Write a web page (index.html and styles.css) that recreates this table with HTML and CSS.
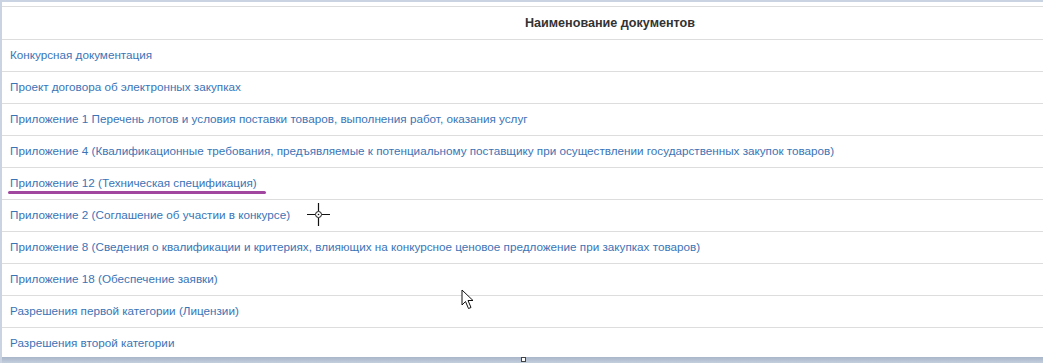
FILE: index.html
```html
<!DOCTYPE html>
<html lang="ru">
<head>
<meta charset="utf-8">
<link rel="stylesheet" href="styles.css">
</head>
<body>
<div class="frame">
  <div class="panel">
    <div class="table">
      <div class="head">Наименование документов</div>
      <div class="row"><a class="link">Конкурсная документация</a></div>
      <div class="row"><a class="link">Проект договора об электронных закупках</a></div>
      <div class="row"><a class="link">Приложение 1 Перечень лотов и условия поставки товаров, выполнения работ, оказания услуг</a></div>
      <div class="row"><a class="link">Приложение 4 (Квалификационные требования, предъявляемые к потенциальному поставщику при осуществлении государственных закупок товаров)</a></div>
      <div class="row"><a class="link">Приложение 12 (Техническая спецификация)</a></div>
      <div class="row"><a class="link">Приложение 2 (Соглашение об участии в конкурсе)</a></div>
      <div class="row"><a class="link">Приложение 8 (Сведения о квалификации и критериях, влияющих на конкурсное ценовое предложение при закупках товаров)</a></div>
      <div class="row"><a class="link">Приложение 18 (Обеспечение заявки)</a></div>
      <div class="row"><a class="link">Разрешения первой категории (Лицензии)</a></div>
      <div class="row"><a class="link">Разрешения второй категории</a></div>
    </div>
    <div class="mark"></div>
    <svg class="crosshair" width="23" height="23" viewBox="0 0 23 23">
      <path d="M11.5 0V8M11.5 15V23M0 11.5H8M15 11.5H23" stroke="#111" stroke-width="1.2" fill="none"/>
      <circle cx="11.5" cy="11.5" r="3" stroke="#111" stroke-width="1" fill="#fff"/>
      <circle cx="11.5" cy="11.5" r="0.8" fill="#111"/>
    </svg>
    <svg class="cursor" width="14" height="21" viewBox="0 0 14 21">
      <path d="M1 1V16L4.5 12.5L7.5 19.5L10 18.5L7 11.5H12Z" fill="#fff" stroke="#111" stroke-width="1" stroke-linejoin="round"/>
    </svg>
  </div>
  <div class="bottom"><span class="handle"></span></div>
</div>
</body>
</html>
```

FILE: styles.css
```css
html, body {
  margin: 0;
  padding: 0;
}
body {
  background: #c9d3e2;
  height: 363px;
  overflow: hidden;
  font-family: "Liberation Sans", Arial, sans-serif;
  font-size: 11.7px;
}
.frame {
  padding: 2px 0 0 2px;
}
.panel {
  position: relative;
  background: #fff;
  height: 355px;
  overflow: hidden;
  padding-top: 4px;
  box-sizing: border-box;
}
.table {
  width: 1216px;
  border-top: 1px solid #dddddd;
}
.head {
  height: 32px;
  border-bottom: 1px solid #dddddd;
  display: flex;
  align-items: center;
  justify-content: center;
  font-weight: bold;
  font-size: 12.6px;
  color: #333;
}
.row {
  height: 31px;
  box-sizing: content-box;
  border-bottom: 1px solid #dddddd;
  display: flex;
  align-items: center;
  padding-left: 8px;
}
.link {
  color: #3b74b6;
  text-decoration: none;
  margin-bottom: 2px;
}
.mark {
  position: absolute;
  left: 6px;
  top: 189px;
  width: 258px;
  height: 3px;
  border-radius: 2px;
  background: #a1479f;
}
.crosshair {
  position: absolute;
  left: 305px;
  top: 201px;
}
.cursor {
  position: absolute;
  left: 459px;
  top: 287px;
}
.bottom {
  position: relative;
  height: 6px;
  background: linear-gradient(#a9b6ca, #c4cedd);
}
.handle {
  position: absolute;
  left: 519px;
  top: 0;
  width: 3px;
  height: 3px;
  background: #fff;
  border: 1px solid #444;
}
```
